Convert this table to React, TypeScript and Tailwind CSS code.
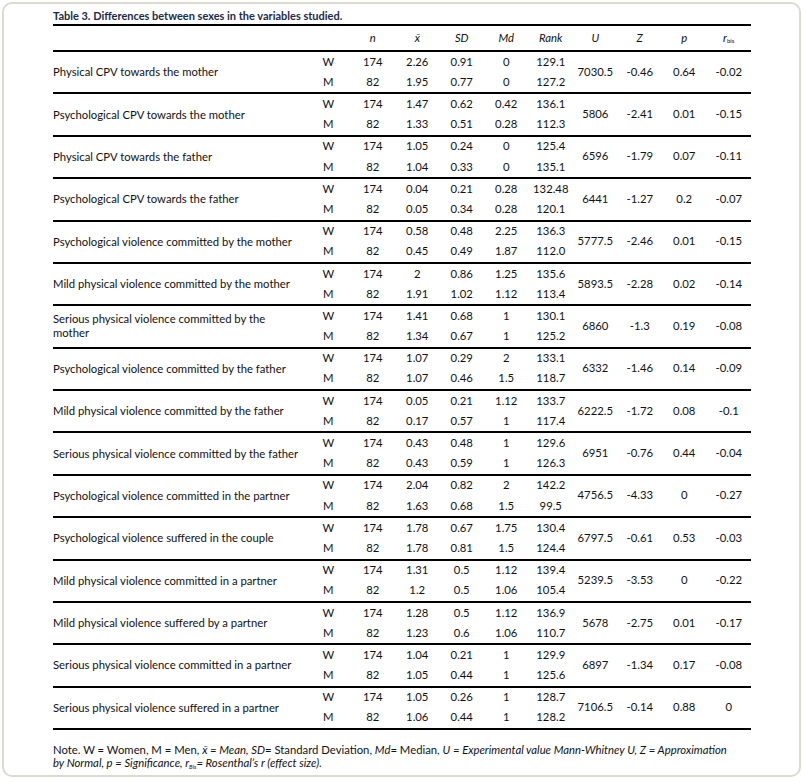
import React from 'react';

type Group = {
  label: React.ReactNode;
  w: string[];
  m: string[];
  stats: string[];
};

const groups: Group[] = [
  { label: 'Physical CPV towards the mother', w: ['174', '2.26', '0.91', '0', '129.1'], m: ['82', '1.95', '0.77', '0', '127.2'], stats: ['7030.5', '-0.46', '0.64', '-0.02'] },
  { label: 'Psychological CPV towards the mother', w: ['174', '1.47', '0.62', '0.42', '136.1'], m: ['82', '1.33', '0.51', '0.28', '112.3'], stats: ['5806', '-2.41', '0.01', '-0.15'] },
  { label: 'Physical CPV towards the father', w: ['174', '1.05', '0.24', '0', '125.4'], m: ['82', '1.04', '0.33', '0', '135.1'], stats: ['6596', '-1.79', '0.07', '-0.11'] },
  { label: 'Psychological CPV towards the father', w: ['174', '0.04', '0.21', '0.28', '132.48'], m: ['82', '0.05', '0.34', '0.28', '120.1'], stats: ['6441', '-1.27', '0.2', '-0.07'] },
  { label: 'Psychological violence committed by the mother', w: ['174', '0.58', '0.48', '2.25', '136.3'], m: ['82', '0.45', '0.49', '1.87', '112.0'], stats: ['5777.5', '-2.46', '0.01', '-0.15'] },
  { label: 'Mild physical violence committed by the mother', w: ['174', '2', '0.86', '1.25', '135.6'], m: ['82', '1.91', '1.02', '1.12', '113.4'], stats: ['5893.5', '-2.28', '0.02', '-0.14'] },
  {
    label: (
      <>
        Serious physical violence committed by the
        <br />
        mother
      </>
    ),
    w: ['174', '1.41', '0.68', '1', '130.1'],
    m: ['82', '1.34', '0.67', '1', '125.2'],
    stats: ['6860', '-1.3', '0.19', '-0.08'],
  },
  { label: 'Psychological violence committed by the father', w: ['174', '1.07', '0.29', '2', '133.1'], m: ['82', '1.07', '0.46', '1.5', '118.7'], stats: ['6332', '-1.46', '0.14', '-0.09'] },
  { label: 'Mild physical violence committed by the father', w: ['174', '0.05', '0.21', '1.12', '133.7'], m: ['82', '0.17', '0.57', '1', '117.4'], stats: ['6222.5', '-1.72', '0.08', '-0.1'] },
  { label: 'Serious physical violence committed by the father', w: ['174', '0.43', '0.48', '1', '129.6'], m: ['82', '0.43', '0.59', '1', '126.3'], stats: ['6951', '-0.76', '0.44', '-0.04'] },
  { label: 'Psychological violence committed in the partner', w: ['174', '2.04', '0.82', '2', '142.2'], m: ['82', '1.63', '0.68', '1.5', '99.5'], stats: ['4756.5', '-4.33', '0', '-0.27'] },
  { label: 'Psychological violence suffered in the couple', w: ['174', '1.78', '0.67', '1.75', '130.4'], m: ['82', '1.78', '0.81', '1.5', '124.4'], stats: ['6797.5', '-0.61', '0.53', '-0.03'] },
  { label: 'Mild physical violence committed in a partner', w: ['174', '1.31', '0.5', '1.12', '139.4'], m: ['82', '1.2', '0.5', '1.06', '105.4'], stats: ['5239.5', '-3.53', '0', '-0.22'] },
  { label: 'Mild physical violence suffered by a partner', w: ['174', '1.28', '0.5', '1.12', '136.9'], m: ['82', '1.23', '0.6', '1.06', '110.7'], stats: ['5678', '-2.75', '0.01', '-0.17'] },
  { label: 'Serious physical violence committed in a partner', w: ['174', '1.04', '0.21', '1', '129.9'], m: ['82', '1.05', '0.44', '1', '125.6'], stats: ['6897', '-1.34', '0.17', '-0.08'] },
  { label: 'Serious physical violence suffered in a partner', w: ['174', '1.05', '0.26', '1', '128.7'], m: ['82', '1.06', '0.44', '1', '128.2'], stats: ['7106.5', '-0.14', '0.88', '0'] },
];

const headers = ['n', 'x\u0304', 'SD', 'Md', 'Rank', 'U', 'Z', 'p'];

export default function App() {
  return (
    <div className="bg-white p-[2px] font-['Lato','Liberation_Sans',sans-serif] text-[11.3px] text-[#111]">
      <div className="w-[799px] h-[775px] rounded-[10px] border-2 border-[#dddad1] px-[49px] pt-[3px]">
        {/* Title */}
        <p className="h-[17px] leading-[17px] text-[11px] font-bold text-[#1b2a48]">
          Table 3. Differences between sexes in the variables studied.
        </p>

        <table className="w-[698px] table-fixed border-collapse">
          <colgroup>
            <col className="w-[253px]" />
            {Array.from({ length: 10 }).map((_, i) => (
              <col key={i} className="w-[44.5px]" />
            ))}
          </colgroup>
          <thead>
            <tr className="h-[26px] border-y-2 border-black">
              <th />
              <th />
              {headers.map((h) => (
                <th key={h} className="text-center font-normal italic">
                  {h}
                </th>
              ))}
              <th className="text-center font-normal italic">
                r<sub className="text-[6px] not-italic leading-none">bis</sub>
              </th>
            </tr>
          </thead>
          {groups.map((g, gi) => (
            <tbody key={gi} className="border-b-2 border-black">
              <tr className="h-[21.2px]">
                <td rowSpan={2} className="text-left align-middle leading-[14px]">
                  {g.label}
                </td>
                <td className="text-center">W</td>
                {g.w.map((v, i) => (
                  <td key={i} className="text-center">
                    {v}
                  </td>
                ))}
                {g.stats.map((v, i) => (
                  <td key={i} rowSpan={2} className="text-center align-middle">
                    {v}
                  </td>
                ))}
              </tr>
              <tr className="h-[21.2px]">
                <td className="text-center">M</td>
                {g.m.map((v, i) => (
                  <td key={i} className="text-center">
                    {v}
                  </td>
                ))}
              </tr>
            </tbody>
          ))}
        </table>

        {/* Note */}
        <p className="mt-[13px] w-[698px] leading-[13px]">
          Note. W = Women, M = Men, <i>x&#772; = Mean, SD</i>= Standard Deviation, <i>Md</i>= Median,{' '}
          <i>
            U = Experimental value Mann-Whitney U, Z = Approximation
            <br />
            by Normal, p = Significance, r<sub className="text-[6px] leading-none">Bis</sub>= Rosenthal’s r (effect
            size).
          </i>
        </p>
      </div>
    </div>
  );
}
